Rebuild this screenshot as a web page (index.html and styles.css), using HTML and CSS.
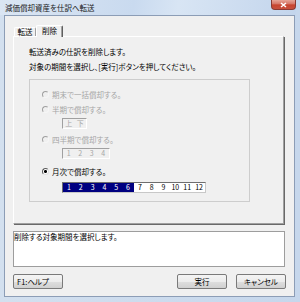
FILE: index.html
```html
<!DOCTYPE html>
<html lang="ja">
<head>
<meta charset="utf-8">
<title>減価償却資産を仕訳へ転送</title>
<link rel="stylesheet" href="styles.css">
</head>
<body>
<div class="window">
  <div class="titlebar">
    <span class="title">減価償却資産を仕訳へ転送</span>
    <div class="close"><svg width="7" height="6" viewBox="0 0 7 6"><path d="M1 1L6 5M6 1L1 5" stroke="#fff" stroke-width="1.5"/></svg></div>
  </div>
  <div class="client">
    <div class="tabs">
      <div class="tab">転送</div>
      <div class="tab active">削除</div>
    </div>
    <div class="panel">
      <p class="line">転送済みの仕訳を削除します。</p>
      <p class="line">対象の期間を選択し、[実行]ボタンを押してください。</p>
      <div class="group">
        <div class="option disabled"><span class="radio"></span>期末で一括償却する。</div>
        <div class="option disabled"><span class="radio"></span>半期で償却する。</div>
        <div class="picker off half"><span>上</span><span>下</span></div>
        <div class="option disabled opt3"><span class="radio"></span>四半期で償却する。</div>
        <div class="picker off quarter"><span>1</span><span>2</span><span>3</span><span>4</span></div>
        <div class="option checked opt4"><span class="radio"></span>月次で償却する。</div>
        <div class="picker months"><span class="sel">1</span><span class="sel">2</span><span class="sel">3</span><span class="sel">4</span><span class="sel">5</span><span class="sel">6</span><span>7</span><span>8</span><span>9</span><span>10</span><span>11</span><span>12</span></div>
      </div>
    </div>
    <div class="message">削除する対象期間を選択します。</div>
    <div class="buttons">
      <button class="btn help">F1:ヘルプ</button>
      <div class="right">
        <button class="btn">実行</button>
        <button class="btn">キャンセル</button>
      </div>
    </div>
  </div>
</div>
</body>
</html>
```

FILE: styles.css
```css
* { box-sizing: border-box; }
html, body { margin: 0; padding: 0; }
body {
  width: 300px;
  height: 302px;
  overflow: hidden;
  font-family: "Noto Sans CJK JP", "Noto Sans", sans-serif;
  font-size: 7.5px;
  font-feature-settings: "palt";
  color: #000;
}
.window {
  width: 300px;
  height: 302px;
  display: flex;
  flex-direction: column;
  background: linear-gradient(to right, #d3e0ef, #c6d7ec);
  padding: 0 5px 5px 4px;
}
.titlebar {
  height: 15px;
  display: flex;
  align-items: flex-start;
  justify-content: space-between;
  margin-right: -1px;
  background: linear-gradient(100deg, #dbe6f3 0%, #c9daef 45%, #d8e5f4 60%, #c3d5ec 100%);
  margin-left: -4px;
  padding-left: 5px;
}
.title {
  line-height: 15px;
  font-size: 7.5px;
  color: #1a1a1a;
}
.close {
  width: 25px;
  height: 10px;
  border: 1px solid #8a3a32;
  border-top: none;
  border-radius: 0 0 4px 4px;
  background: linear-gradient(#e6a597 0%, #d77a6b 40%, #c7452f 55%, #c8503e 100%);
  display: flex;
  align-items: center;
  justify-content: center;
}
.close svg { display: block; }
.client {
  flex: 1;
  border: 1px solid #8c9db6;
  background: #f0f0f0;
  padding: 9px 8px 0 8px;
  display: flex;
  flex-direction: column;
}
.tabs {
  height: 11px;
  display: flex;
  align-items: flex-end;
  padding-left: 1px;
  position: relative;
  z-index: 1;
}
.tab {
  height: 9px;
  width: 22px;
  border-top: 1px solid #fff;
  border-left: 1px solid #fff;
  border-right: 1px solid #a0a0a0;
  border-radius: 2px 2px 0 0;
  text-align: center;
  line-height: 8px;
  font-size: 7.5px;
}
.tab.active {
  height: 12px;
  width: 27px;
  margin-bottom: -1px;
  background: #f0f0f0;
  border-right: 1px solid #5e5e5e;
  box-shadow: inset -1px 0 0 #a0a0a0;
  line-height: 10px;
}
.panel {
  height: 188px;
  margin-right: 2px;
  border-top: 1px solid #fff;
  border-left: 1px solid #fff;
  border-right: 1px solid #a0a0a0;
  border-bottom: 1px solid #a0a0a0;
  box-shadow: 1px 1px 0 #696969;
  padding: 7px 0 0 15px;
}
.line {
  margin: 0;
  line-height: 15px;
  white-space: nowrap;
}
.group {
  margin-top: 5px;
  width: 221px;
  height: 123px;
  border: 1px solid #cdcdcd;
  padding-top: 7px;
}
.option {
  height: 15px;
  display: flex;
  align-items: center;
  padding-left: 12px;
  white-space: nowrap;
}
.option.disabled { color: #a6a6a6; }
.radio {
  width: 7px;
  height: 7px;
  border-radius: 50%;
  border: 1px solid;
  margin-right: 3px;
  flex: none;
}
.disabled .radio {
  border-color: #a0a0a0 #f6f6f6 #f6f6f6 #a0a0a0;
}
.checked .radio {
  border-color: #5a5a5a #e0e0e0 #e0e0e0 #5a5a5a;
  background: radial-gradient(circle, #000 0 1.3px, #fff 1.6px);
}
.opt3 { margin-top: 3px; }
.opt4 { margin-top: 5px; }
.picker {
  margin-left: 32px;
  height: 11px;
  display: flex;
  border: 1px solid;
  font-size: 7px;
  line-height: 9px;
}
.picker span {
  flex: 1;
  text-align: center;
}
.picker.off {
  border-color: #a0a0a0 #ffffff #ffffff #a0a0a0;
  color: #a6a6a6;
  margin-top: 1px;
}
.half { width: 25px; }
.quarter { width: 48px; }
.months {
  width: 144px;
  margin-top: 3px;
  border-color: #6e6e6e #c8c8c8 #c8c8c8 #6e6e6e;
  background: #fff;
}
.months .sel {
  background: #000080;
  color: #fff;
}
.message {
  margin-top: 7px;
  margin-right: 1px;
  height: 36px;
  background: #fff;
  border: 1px solid #9d9d9d;
  line-height: 8px;
  padding-top: 1px;
  white-space: nowrap;
}
.buttons {
  margin-top: 7px;
  height: 15px;
  display: flex;
  justify-content: space-between;
}
.right {
  display: flex;
  gap: 9px;
}
.btn {
  width: 50px;
  height: 15px;
  padding: 0;
  margin: 0;
  border: 1px solid #7a7a7a;
  border-radius: 2px;
  background: linear-gradient(#f4f4f4 0%, #ececec 50%, #dedede 51%, #d0d0d0 100%);
  font-family: "Noto Sans CJK JP", "Noto Sans", sans-serif;
  font-size: 7.5px;
  font-feature-settings: "palt";
  color: #000;
  line-height: 13px;
  text-align: center;
}
.btn.help {
  text-align: left;
  padding-left: 3px;
}
```
